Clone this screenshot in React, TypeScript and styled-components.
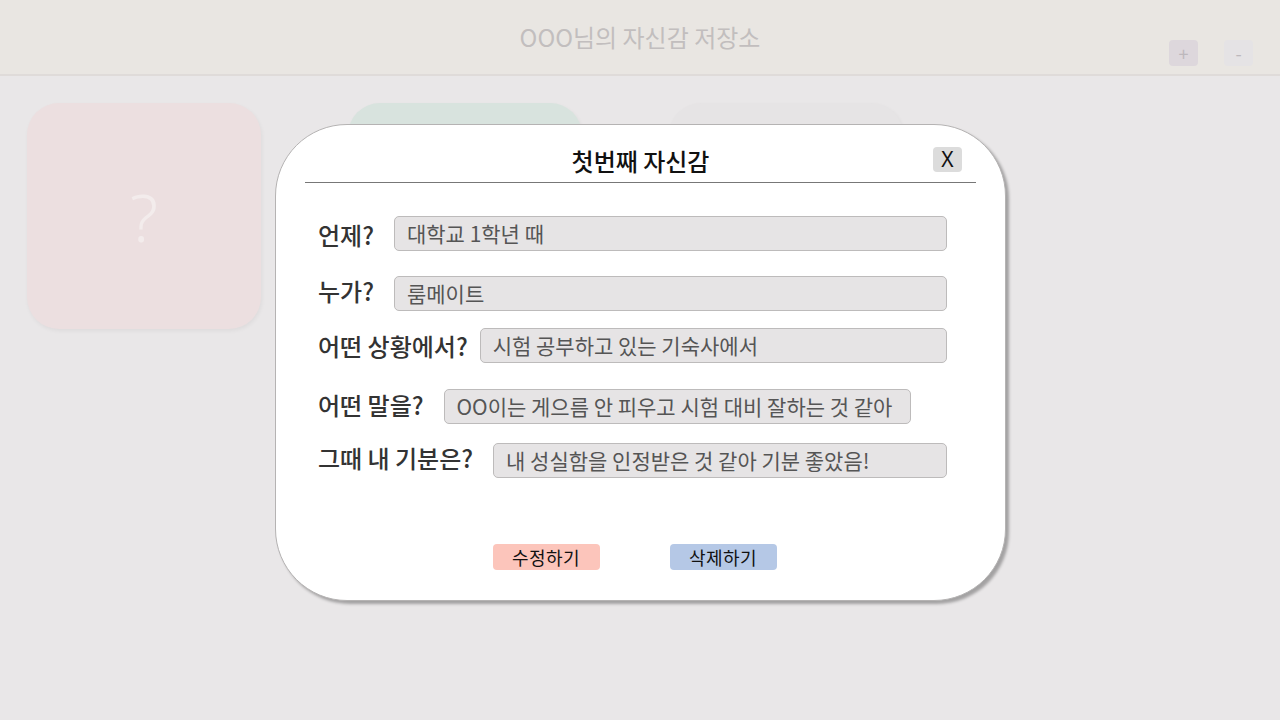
import React from "react";
import styled, { createGlobalStyle } from "styled-components";

const Global = createGlobalStyle`
  html, body { margin: 0; padding: 0; }
  body {
    background: #e9e7e8;
    font-family: "Noto Sans CJK KR", "Noto Sans", sans-serif;
    width: 1280px;
    height: 720px;
    overflow: hidden;
  }
`;

const Page = styled.div`
  width: 1280px;
  height: 720px;
  position: relative;
  background: #e9e7e8;
`;

const Header = styled.header`
  height: 76px;
  box-sizing: border-box;
  background: #e9e6e2;
  border-bottom: 2px solid #dfdbd9;
  display: flex;
  align-items: center;
  justify-content: center;
  position: relative;
`;

const Title = styled.h1`
  margin: 0;
  margin-top: -2px;
  font-size: 24px;
  font-weight: 400;
  color: #c2bebe;
`;

const HeaderButtons = styled.div`
  position: absolute;
  right: 27px;
  top: 40px;
  display: flex;
  gap: 26px;
`;

const SmallBtn = styled.div<{ $bg: string }>`
  width: 29px;
  height: 26px;
  border-radius: 4px;
  background: ${(p) => p.$bg};
  color: #bdb8bc;
  font-size: 18px;
  display: flex;
  align-items: center;
  justify-content: center;
  line-height: 1;
`;

const Cards = styled.div`
  display: flex;
  gap: 87px;
  padding: 27px 27px;
`;

const Card = styled.div<{ $bg: string }>`
  width: 234px;
  height: 226px;
  border-radius: 32px;
  background: ${(p) => p.$bg};
  box-shadow: 1px 2px 4px rgba(0, 0, 0, 0.05);
  display: flex;
  align-items: center;
  justify-content: center;
  font-size: 66px;
  color: #f3ecec;
  font-family: "Noto Sans", sans-serif;
  font-weight: 300;
`;

const Overlay = styled.div`
  position: absolute;
  inset: 0;
  display: flex;
  justify-content: center;
  align-items: flex-start;
  padding-top: 124px;
  padding-left: 1px;
`;

const Modal = styled.div`
  width: 731px;
  height: 477px;
  box-sizing: border-box;
  background: #fff;
  border: 1px solid #b5b3b3;
  border-radius: 72px;
  box-shadow: 3px 3px 3px rgba(0, 0, 0, 0.3);
  padding: 0 29px;
  display: flex;
  flex-direction: column;
`;

const ModalHead = styled.div`
  height: 57px;
  border-bottom: 1px solid #777;
  display: flex;
  align-items: center;
  justify-content: center;
  position: relative;
`;

const ModalTitle = styled.h2`
  margin: 0;
  margin-top: 13px;
  font-size: 24px;
  font-weight: 500;
  color: #111;
`;

const CloseBtn = styled.button`
  position: absolute;
  right: 14px;
  top: 22px;
  width: 29px;
  height: 25px;
  border: none;
  border-radius: 4px;
  background: #dcdcdc;
  font-family: "Noto Sans", sans-serif;
  font-size: 21px;
  color: #111;
  padding: 0;
  line-height: 25px;
`;

const Form = styled.div`
  display: flex;
  flex-direction: column;
  padding: 0 13px;
`;

const Row = styled.div<{ $mt: number }>`
  display: flex;
  align-items: center;
  margin-top: ${(p) => p.$mt}px;
  height: 35px;
`;

const Label = styled.span<{ $dy: number; $gap: number }>`
  font-size: 24px;
  font-weight: 500;
  color: #333;
  margin-right: ${(p) => p.$gap}px;
  position: relative;
  top: ${(p) => p.$dy}px;
  white-space: nowrap;
`;

const Field = styled.div<{ $w: number }>`
  width: ${(p) => p.$w}px;
  height: 35px;
  box-sizing: border-box;
  background: #e6e4e5;
  border: 1px solid #bdbbbb;
  border-radius: 5px;
  padding-left: 12px;
  display: flex;
  align-items: center;
  font-size: 21px;
  font-weight: 400;
  color: #555;
  white-space: nowrap;
  overflow: hidden;
  padding-bottom: 2px;
`;

const Actions = styled.div`
  display: flex;
  justify-content: center;
  gap: 70px;
  margin-top: 66px;
  padding-right: 12px;
`;

const ActionBtn = styled.button<{ $bg: string }>`
  width: 107px;
  height: 26px;
  border: none;
  border-radius: 4px;
  background: ${(p) => p.$bg};
  font-family: "Noto Sans CJK KR", sans-serif;
  font-size: 18px;
  letter-spacing: 0.5px;
  color: #111;
  padding: 0;
  line-height: 26px;
`;

const rows = [
  { label: "언제?", value: "대학교 1학년 때", w: 553, mt: 33, dy: 1, gap: 20 },
  { label: "누가?", value: "룸메이트", w: 553, mt: 25, dy: -3, gap: 20 },
  { label: "어떤 상황에서?", value: "시험 공부하고 있는 기숙사에서", w: 467, mt: 17, dy: 0, gap: 12 },
  { label: "어떤 말을?", value: "OO이는 게으름 안 피우고 시험 대비 잘하는 것 같아", w: 467, mt: 26, dy: -2, gap: 20 },
  { label: "그때 내 기분은?", value: "내 성실함을 인정받은 것 같아 기분 좋았음!", w: 454, mt: 19, dy: -3, gap: 20 },
];

export default function App() {
  return (
    <>
      <Global />
      <Page>
        <Header>
          <Title>OOO님의 자신감 저장소</Title>
          <HeaderButtons>
            <SmallBtn $bg="#ddd7dc">+</SmallBtn>
            <SmallBtn $bg="#e5e3e5">-</SmallBtn>
          </HeaderButtons>
        </Header>
        <Cards>
          <Card $bg="#ecdfe0">?</Card>
          <Card $bg="#d8e3de" />
          <Card $bg="#e6e4e5" />
        </Cards>
        <Overlay>
          <Modal>
            <ModalHead>
              <ModalTitle>첫번째 자신감</ModalTitle>
              <CloseBtn>X</CloseBtn>
            </ModalHead>
            <Form>
              {rows.map((r) => (
                <Row key={r.label} $mt={r.mt}>
                  <Label $dy={r.dy} $gap={r.gap}>{r.label}</Label>
                  <Field $w={r.w}>{r.value}</Field>
                </Row>
              ))}
            </Form>
            <Actions>
              <ActionBtn $bg="#fcc5bb">수정하기</ActionBtn>
              <ActionBtn $bg="#b5c8e6">삭제하기</ActionBtn>
            </Actions>
          </Modal>
        </Overlay>
      </Page>
    </>
  );
}
